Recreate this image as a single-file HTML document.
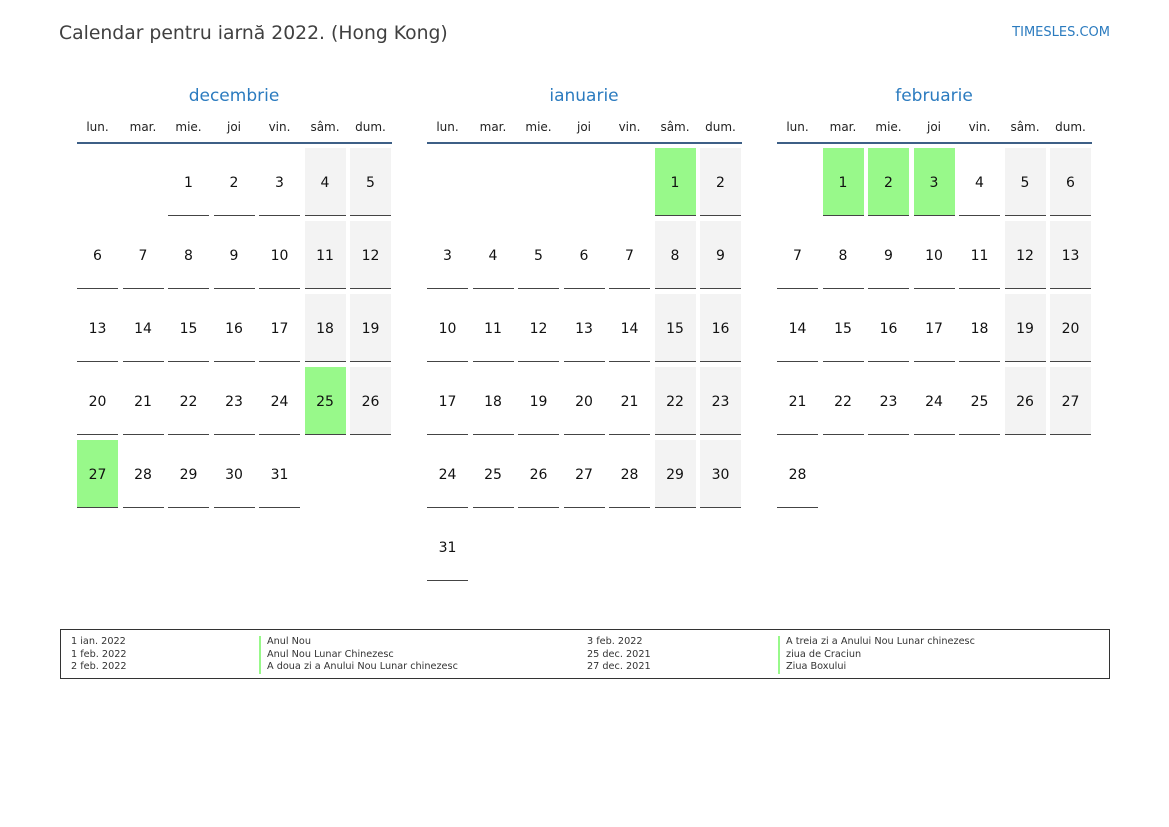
<!DOCTYPE html>
<html><head><meta charset="utf-8"><style>
body{margin:0;width:1169px;height:827px;background:#fff;font-family:"DejaVu Sans","Liberation Sans",sans-serif;position:relative;overflow:hidden}
.a{position:absolute}
.title{left:59px;top:23px;font-size:18.8px;color:#404040}
.site{right:59px;top:25px;font-size:13px;color:#2b7bbf}
.mn{font-size:17px;color:#2b7bbf;text-align:center;width:314px;top:86px}
.wd{font-size:12px;color:#222;text-align:center;width:41px;top:120px}
.hl{height:2px;background:#3d5f86;width:315px;top:142px}
.c{width:41px;height:67px;border-bottom:1px solid #444;font-size:14px;color:#111;text-align:center;line-height:70px}
.g{background:#f3f3f3}
.h{background:#98f98a}
.box{left:60px;top:629px;width:1048px;height:48px;border:1px solid #333}
.l{font-size:9.7px;color:#333;line-height:12.5px}
.bar{border-left:2px solid #98f98a;padding-left:6px}
</style></head><body>
<div class="a title">Calendar pentru iarnă 2022. (Hong Kong)</div>
<div class="a site">TIMESLES.COM</div>
<div id="cal"></div>
<div class="a box"></div>
<div class="a l" style="left:71px;top:636px">1 ian. 2022<br>1 feb. 2022<br>2 feb. 2022</div>
<div class="a l bar" style="left:259px;top:636px">Anul Nou<br>Anul Nou Lunar Chinezesc<br>A doua zi a Anului Nou Lunar chinezesc</div>
<div class="a l" style="left:587px;top:636px">3 feb. 2022<br>25 dec. 2021<br>27 dec. 2021</div>
<div class="a l bar" style="left:778px;top:636px">A treia zi a Anului Nou Lunar chinezesc<br>ziua de Craciun<br>Ziua Boxului</div>
<script>
var months=[["decembrie",77,2,31,[25,27]],["ianuarie",427,5,31,[1]],["februarie",777,1,28,[1,2,3]]];
var wd=["lun.","mar.","mie.","joi","vin.","sâm.","dum."];
var h="";
months.forEach(function(m){
 var b=m[1];
 h+='<div class="a mn" style="left:'+b+'px">'+m[0]+'</div>';
 h+='<div class="a hl" style="left:'+b+'px"></div>';
 for(var i=0;i<7;i++)h+='<div class="a wd" style="left:'+(b+i*45.5)+'px">'+wd[i]+'</div>';
 for(var d=1;d<=m[3];d++){
  var p=m[2]+d-1,c=p%7,r=Math.floor(p/7);
  var cls="c";
  if(m[4].indexOf(d)>=0)cls+=" h";else if(c>=5)cls+=" g";
  h+='<div class="a '+cls+'" style="left:'+(b+c*45.5)+'px;top:'+(148+r*73)+'px">'+d+'</div>';
 }
});
document.getElementById("cal").innerHTML=h;
</script>
</body></html>
